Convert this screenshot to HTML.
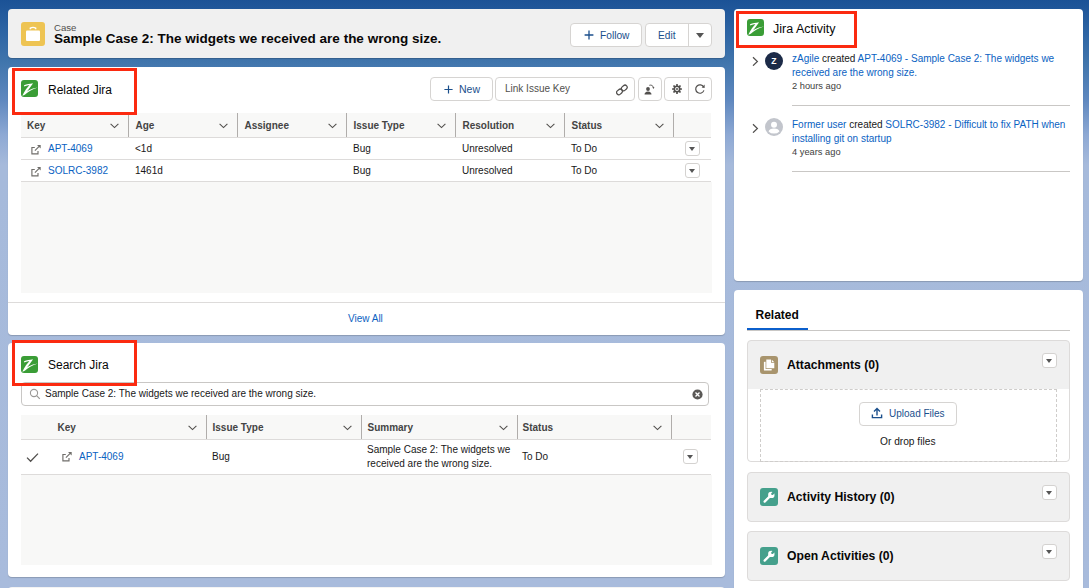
<!DOCTYPE html>
<html><head><meta charset="utf-8">
<style>
*{box-sizing:border-box;margin:0;padding:0}
html,body{width:1089px;height:588px;overflow:hidden}
body{font-family:"Liberation Sans",sans-serif;color:#181818;position:relative;
background:linear-gradient(180deg,#1b5296 0px,#2f66a5 35px,#4075ac 62px,#5f88bf 100px,#8ea9d4 135px,#a6badb 165px,#a8bbdc 588px);}
.abs{position:absolute}
.card{position:absolute;background:#fff;border-radius:4px;box-shadow:0 1px 1px rgba(0,0,0,.18)}
.redbox{position:absolute;border:3px solid #fb2a10;z-index:5}
.btn{position:absolute;background:#fff;border:1px solid #d6d4d2;border-radius:4px}
.t{position:absolute;white-space:nowrap;line-height:1}
.th{position:absolute;background:#f8f8f7;border-bottom:1px solid #dddbda}
.row{position:absolute;border-bottom:1px solid #dddbda;background:#fff}
.vd{position:absolute;width:1px;background:#b0adab}
.ddbtn{position:absolute;width:15px;height:15px;border:1px solid #d4d2d0;border-radius:3px;background:#fff}
.ddbtn:after{content:"";position:absolute;left:2.8px;top:4.6px;border-left:3.7px solid transparent;border-right:3.7px solid transparent;border-top:4.4px solid #555}
</style></head>
<body>

<div class="card" style="left:8px;top:9px;width:717px;height:49px;background:#f0f0f0"></div>
<svg class="abs" style="left:21px;top:22px" width="24" height="24" viewBox="0 0 24 24"><rect width="24" height="24" rx="3" fill="#eec453"/><rect x="5" y="8.4" width="14" height="10.7" rx="1" fill="#fff"/><path d="M9.3 7.3 V6.2 Q12 4.6 14.7 6.2 V7.3" fill="none" stroke="#fff" stroke-width="1.4"/></svg>
<div class="t" style="left:54px;top:22.5px;font-size:9.6px;font-weight:400;color:#514f4d;">Case</div>
<div class="t" style="left:54px;top:32px;font-size:13.5px;font-weight:700;color:#080707;">Sample Case 2: The widgets we received are the wrong size.</div>
<div class="btn" style="left:570px;top:23px;width:72px;height:24px"></div>
<svg class="abs" style="left:584px;top:30px" width="10" height="10" viewBox="0 0 10 10"><path d="M5 0.6 V9.4 M0.6 5 H9.4" stroke="#1b4f8c" stroke-width="1.3"/></svg>
<div class="t" style="left:600px;top:30.5px;font-size:10.2px;font-weight:400;color:#1b4f8c;">Follow</div>
<div class="btn" style="left:645px;top:23px;width:67px;height:24px"></div>
<div class="abs" style="left:688px;top:24px;width:1px;height:22px;background:#d6d4d2"></div>
<div class="t" style="left:658px;top:30.5px;font-size:10.2px;font-weight:400;color:#1b4f8c;">Edit</div>
<div class="abs" style="left:696px;top:33px;border-left:4.5px solid transparent;border-right:4.5px solid transparent;border-top:5px solid #555"></div>
<div class="card" style="left:8px;top:67px;width:717px;height:268px"></div>
<div class="redbox" style="left:12px;top:68px;width:125px;height:47px"></div>
<svg class="abs" style="left:21px;top:80px" width="17" height="17" viewBox="0 0 17 17"><rect width="17" height="17" rx="3" fill="#3a9d36"/><path d="M3.0 5.3 C5.8 4.3 8.6 3.7 11.8 3.5 L10.9 5.1 C8.3 5.1 6 5.5 3.3 6.4 Z M9.8 3.8 L11.9 3.6 C9.3 7.4 6.8 10.6 3.4 15.0 L1.3 15.8 C3.4 11.2 6.2 7.2 9.8 3.8 Z M1.5 15.6 C5 11 10 8.4 16.7 7.5 C11 9.4 6.8 12.0 3.8 14.8 Z" fill="#fff"/></svg>
<div class="t" style="left:48px;top:84px;font-size:12px;font-weight:400;color:#080707;">Related Jira</div>
<div class="btn" style="left:430px;top:77px;width:63px;height:24px"></div>
<svg class="abs" style="left:444px;top:85px" width="9" height="9" viewBox="0 0 9 9"><path d="M4.5 0.4 V8.6 M0.4 4.5 H8.6" stroke="#1b4f8c" stroke-width="1.2"/></svg>
<div class="t" style="left:459px;top:84px;font-size:10.5px;font-weight:400;color:#1b4f8c;">New</div>
<div class="btn" style="left:495px;top:77px;width:140px;height:24px;border-color:#d6d4d2"></div>
<div class="t" style="left:505px;top:84px;font-size:10px;font-weight:400;color:#514f4d;">Link Issue Key</div>
<svg class="abs" style="left:616px;top:84px" width="12" height="12" viewBox="0 0 12 12"><g fill="none" stroke="#514f4d" stroke-width="1.25"><rect x="-3.1" y="-2.2" width="6.2" height="4.4" rx="2.2" transform="translate(3.5 7.9) rotate(-42)"/><rect x="-3.1" y="-2.2" width="6.2" height="4.4" rx="2.2" transform="translate(8.3 3.9) rotate(-42)"/></g></svg>
<div class="btn" style="left:638px;top:77px;width:24px;height:24px"></div>
<svg class="abs" style="left:643px;top:83px" width="13" height="13" viewBox="0 0 13 13"><circle cx="5" cy="6" r="1.9" fill="#514f4d"/><path d="M1.5 11.5 Q1.6 8.6 5 8.4 Q8.4 8.6 8.5 11.5 Z" fill="#514f4d"/><path d="M6.3 2.3 Q9.5 1.4 10.5 4.6" fill="none" stroke="#514f4d" stroke-width="0.9"/><path d="M9.3 4.2 L11.4 4.0 L10.5 6.0 Z" fill="#514f4d"/></svg>
<div class="btn" style="left:664px;top:77px;width:48px;height:24px"></div>
<div class="abs" style="left:688px;top:78px;width:1px;height:22px;background:#d6d4d2"></div>
<svg class="abs" style="left:671px;top:83px" width="12" height="12" viewBox="0 0 12 12"><g fill="#514f4d"><circle cx="6" cy="6" r="3.5"/><rect x="5.15" y="1.0" width="1.7" height="10" rx=".5" transform="rotate(0 6 6)"/><rect x="5.15" y="1.0" width="1.7" height="10" rx=".5" transform="rotate(45 6 6)"/><rect x="5.15" y="1.0" width="1.7" height="10" rx=".5" transform="rotate(90 6 6)"/><rect x="5.15" y="1.0" width="1.7" height="10" rx=".5" transform="rotate(135 6 6)"/></g><circle cx="6" cy="6" r="1.9" fill="#fff"/><circle cx="6" cy="6" r="1.0" fill="#514f4d"/></svg>
<svg class="abs" style="left:694px;top:83px" width="12" height="12" viewBox="0 0 12 12"><path d="M9.6 4.0 A4.2 4.2 0 1 0 9.9 7.4" fill="none" stroke="#514f4d" stroke-width="1.2"/><path d="M7.6 4.6 L10.6 4.9 L10.6 1.6 Z" fill="#514f4d"/></svg>
<div class="th" style="left:21px;top:113px;width:690px;height:25px"></div>
<div class="t" style="left:27px;top:121px;font-size:10px;font-weight:700;color:#444;">Key</div>
<svg class="abs" style="left:110px;top:123px" width="9" height="6" viewBox="0 0 9 6"><path d="M0.6 0.8 L4.5 4.6 L8.4 0.8" fill="none" stroke="#514f4d" stroke-width="1.1"/></svg>
<div class="vd" style="left:128px;top:113px;height:24px"></div>
<div class="t" style="left:135.5px;top:121px;font-size:10px;font-weight:700;color:#444;">Age</div>
<svg class="abs" style="left:219px;top:123px" width="9" height="6" viewBox="0 0 9 6"><path d="M0.6 0.8 L4.5 4.6 L8.4 0.8" fill="none" stroke="#514f4d" stroke-width="1.1"/></svg>
<div class="vd" style="left:237px;top:113px;height:24px"></div>
<div class="t" style="left:244.5px;top:121px;font-size:10px;font-weight:700;color:#444;">Assignee</div>
<svg class="abs" style="left:328px;top:123px" width="9" height="6" viewBox="0 0 9 6"><path d="M0.6 0.8 L4.5 4.6 L8.4 0.8" fill="none" stroke="#514f4d" stroke-width="1.1"/></svg>
<div class="vd" style="left:346px;top:113px;height:24px"></div>
<div class="t" style="left:353.5px;top:121px;font-size:10px;font-weight:700;color:#444;">Issue Type</div>
<svg class="abs" style="left:437px;top:123px" width="9" height="6" viewBox="0 0 9 6"><path d="M0.6 0.8 L4.5 4.6 L8.4 0.8" fill="none" stroke="#514f4d" stroke-width="1.1"/></svg>
<div class="vd" style="left:455px;top:113px;height:24px"></div>
<div class="t" style="left:462.5px;top:121px;font-size:10px;font-weight:700;color:#444;">Resolution</div>
<svg class="abs" style="left:546px;top:123px" width="9" height="6" viewBox="0 0 9 6"><path d="M0.6 0.8 L4.5 4.6 L8.4 0.8" fill="none" stroke="#514f4d" stroke-width="1.1"/></svg>
<div class="vd" style="left:564px;top:113px;height:24px"></div>
<div class="t" style="left:571.5px;top:121px;font-size:10px;font-weight:700;color:#444;">Status</div>
<svg class="abs" style="left:655px;top:123px" width="9" height="6" viewBox="0 0 9 6"><path d="M0.6 0.8 L4.5 4.6 L8.4 0.8" fill="none" stroke="#514f4d" stroke-width="1.1"/></svg>
<div class="vd" style="left:673px;top:113px;height:24px"></div>
<div class="row" style="left:21px;top:138px;width:690px;height:22px"></div>
<svg class="abs" style="left:31px;top:144px" width="11" height="11" viewBox="0 0 11 11"><path d="M3.8 3.5 H0.9 V9.9 H7.0 V7.0" fill="none" stroke="#706e6b" stroke-width="1.15"/><path d="M3.9 6.7 L8.7 1.9" stroke="#706e6b" stroke-width="1.15"/><path d="M6.0 0.9 H9.7 V4.6 Z" fill="#706e6b"/></svg>
<div class="t" style="left:48px;top:144px;font-size:10px;font-weight:400;color:#0a62c2;">APT-4069</div>
<div class="t" style="left:135px;top:144px;font-size:10px;font-weight:400;color:#181818;">&lt;1d</div>
<div class="t" style="left:353px;top:144px;font-size:10px;font-weight:400;color:#181818;">Bug</div>
<div class="t" style="left:462px;top:144px;font-size:10px;font-weight:400;color:#181818;">Unresolved</div>
<div class="t" style="left:571px;top:144px;font-size:10px;font-weight:400;color:#181818;">To Do</div>
<div class="ddbtn" style="left:685px;top:141px"></div>
<div class="row" style="left:21px;top:160px;width:690px;height:22px"></div>
<svg class="abs" style="left:31px;top:166px" width="11" height="11" viewBox="0 0 11 11"><path d="M3.8 3.5 H0.9 V9.9 H7.0 V7.0" fill="none" stroke="#706e6b" stroke-width="1.15"/><path d="M3.9 6.7 L8.7 1.9" stroke="#706e6b" stroke-width="1.15"/><path d="M6.0 0.9 H9.7 V4.6 Z" fill="#706e6b"/></svg>
<div class="t" style="left:48px;top:166px;font-size:10px;font-weight:400;color:#0a62c2;">SOLRC-3982</div>
<div class="t" style="left:135px;top:166px;font-size:10px;font-weight:400;color:#181818;">1461d</div>
<div class="t" style="left:353px;top:166px;font-size:10px;font-weight:400;color:#181818;">Bug</div>
<div class="t" style="left:462px;top:166px;font-size:10px;font-weight:400;color:#181818;">Unresolved</div>
<div class="t" style="left:571px;top:166px;font-size:10px;font-weight:400;color:#181818;">To Do</div>
<div class="ddbtn" style="left:685px;top:163px"></div>
<div class="abs" style="left:21px;top:182px;width:691px;height:111px;background:#f8f8f7"></div>
<div class="abs" style="left:8px;top:302px;width:717px;height:1px;background:#dddbda"></div>
<div class="t" style="left:348px;top:314px;font-size:10px;font-weight:400;color:#0a62c2;">View All</div>
<div class="card" style="left:8px;top:343px;width:717px;height:234px"></div>
<div class="redbox" style="left:12px;top:340px;width:125px;height:46px"></div>
<svg class="abs" style="left:21px;top:356px" width="17" height="17" viewBox="0 0 17 17"><rect width="17" height="17" rx="3" fill="#3a9d36"/><path d="M3.0 5.3 C5.8 4.3 8.6 3.7 11.8 3.5 L10.9 5.1 C8.3 5.1 6 5.5 3.3 6.4 Z M9.8 3.8 L11.9 3.6 C9.3 7.4 6.8 10.6 3.4 15.0 L1.3 15.8 C3.4 11.2 6.2 7.2 9.8 3.8 Z M1.5 15.6 C5 11 10 8.4 16.7 7.5 C11 9.4 6.8 12.0 3.8 14.8 Z" fill="#fff"/></svg>
<div class="t" style="left:48px;top:359px;font-size:12px;font-weight:400;color:#080707;">Search Jira</div>
<div class="btn" style="left:21px;top:382px;width:688px;height:24px;border-color:#c9c7c5"></div>
<svg class="abs" style="left:29px;top:388px" width="12" height="12" viewBox="0 0 12 12"><circle cx="5" cy="5" r="3.6" fill="none" stroke="#9a9896" stroke-width="1.1"/><path d="M7.6 7.6 L10.8 10.8" stroke="#9a9896" stroke-width="1.2"/></svg>
<div class="t" style="left:45px;top:389px;font-size:10px;font-weight:400;color:#181818;">Sample Case 2: The widgets we received are the wrong size.</div>
<svg class="abs" style="left:692px;top:389px" width="11" height="11" viewBox="0 0 11 11"><circle cx="5.5" cy="5.5" r="5.1" fill="#5a5856"/><path d="M3.5 3.5 L7.5 7.5 M7.5 3.5 L3.5 7.5" stroke="#fff" stroke-width="1.3"/></svg>
<div class="th" style="left:21px;top:415px;width:690px;height:25px"></div>
<div class="t" style="left:57.5px;top:423px;font-size:10px;font-weight:700;color:#444;">Key</div>
<svg class="abs" style="left:188px;top:425px" width="9" height="6" viewBox="0 0 9 6"><path d="M0.6 0.8 L4.5 4.6 L8.4 0.8" fill="none" stroke="#514f4d" stroke-width="1.1"/></svg>
<div class="vd" style="left:206px;top:415px;height:24px"></div>
<div class="t" style="left:212.5px;top:423px;font-size:10px;font-weight:700;color:#444;">Issue Type</div>
<svg class="abs" style="left:343px;top:425px" width="9" height="6" viewBox="0 0 9 6"><path d="M0.6 0.8 L4.5 4.6 L8.4 0.8" fill="none" stroke="#514f4d" stroke-width="1.1"/></svg>
<div class="vd" style="left:361px;top:415px;height:24px"></div>
<div class="t" style="left:367.5px;top:423px;font-size:10px;font-weight:700;color:#444;">Summary</div>
<svg class="abs" style="left:499px;top:425px" width="9" height="6" viewBox="0 0 9 6"><path d="M0.6 0.8 L4.5 4.6 L8.4 0.8" fill="none" stroke="#514f4d" stroke-width="1.1"/></svg>
<div class="vd" style="left:517px;top:415px;height:24px"></div>
<div class="t" style="left:522.5px;top:423px;font-size:10px;font-weight:700;color:#444;">Status</div>
<svg class="abs" style="left:653px;top:425px" width="9" height="6" viewBox="0 0 9 6"><path d="M0.6 0.8 L4.5 4.6 L8.4 0.8" fill="none" stroke="#514f4d" stroke-width="1.1"/></svg>
<div class="vd" style="left:671px;top:415px;height:24px"></div>
<div class="row" style="left:21px;top:440px;width:690px;height:35px"></div>
<svg class="abs" style="left:26px;top:452px" width="13" height="11" viewBox="0 0 13 11"><path d="M1 5.6 L4.6 9.2 L12 1.6" fill="none" stroke="#514f4d" stroke-width="1.3"/></svg>
<svg class="abs" style="left:62px;top:451px" width="11" height="11" viewBox="0 0 11 11"><path d="M3.8 3.5 H0.9 V9.9 H7.0 V7.0" fill="none" stroke="#706e6b" stroke-width="1.15"/><path d="M3.9 6.7 L8.7 1.9" stroke="#706e6b" stroke-width="1.15"/><path d="M6.0 0.9 H9.7 V4.6 Z" fill="#706e6b"/></svg>
<div class="t" style="left:79px;top:452px;font-size:10px;font-weight:400;color:#0a62c2;">APT-4069</div>
<div class="t" style="left:212px;top:452px;font-size:10px;font-weight:400;color:#181818;">Bug</div>
<div class="t" style="left:367px;top:445px;font-size:10px;font-weight:400;color:#181818;">Sample Case 2: The widgets we</div>
<div class="t" style="left:367px;top:459px;font-size:10px;font-weight:400;color:#181818;">received are the wrong size.</div>
<div class="t" style="left:522px;top:452px;font-size:10px;font-weight:400;color:#181818;">To Do</div>
<div class="ddbtn" style="left:683px;top:449px"></div>
<div class="abs" style="left:21px;top:475px;width:691px;height:90px;background:#f8f8f7"></div>
<div class="abs" style="left:8px;top:587px;width:717px;height:4px;background:#f3f3f3;border-radius:4px 4px 0 0"></div>
<div class="card" style="left:734px;top:9px;width:349px;height:272px"></div>
<div class="redbox" style="left:736px;top:11px;width:121px;height:37px"></div>
<svg class="abs" style="left:747px;top:19px" width="17" height="17" viewBox="0 0 17 17"><rect width="17" height="17" rx="3" fill="#3a9d36"/><path d="M3.0 5.3 C5.8 4.3 8.6 3.7 11.8 3.5 L10.9 5.1 C8.3 5.1 6 5.5 3.3 6.4 Z M9.8 3.8 L11.9 3.6 C9.3 7.4 6.8 10.6 3.4 15.0 L1.3 15.8 C3.4 11.2 6.2 7.2 9.8 3.8 Z M1.5 15.6 C5 11 10 8.4 16.7 7.5 C11 9.4 6.8 12.0 3.8 14.8 Z" fill="#fff"/></svg>
<div class="t" style="left:773px;top:23px;font-size:12.5px;font-weight:400;color:#080707;">Jira Activity</div>
<svg class="abs" style="left:752px;top:56px" width="7" height="10" viewBox="0 0 7 10"><path d="M1 1.3 L5.4 5.5 L1 9.7" fill="none" stroke="#514f4d" stroke-width="1.2"/></svg>
<div class="abs" style="left:765px;top:52px;width:18px;height:18px;border-radius:50%;background:#1c2b48"></div>
<div class="t" style="left:771.3px;top:57.2px;font-size:8.6px;font-weight:700;color:#fff;">Z</div>
<div class="t" style="left:792px;top:52px;font-size:10px;line-height:14px;color:#0a62c2">zAgile <span style="color:#181818">created</span> APT-4069 - Sample Case 2: The widgets we<br>received are the wrong size.</div>
<div class="t" style="left:792px;top:82px;font-size:9.3px;font-weight:400;color:#3e3e3c;">2 hours ago</div>
<div class="abs" style="left:792px;top:105px;width:278px;height:1px;background:#c9c7c5"></div>
<svg class="abs" style="left:752px;top:123px" width="7" height="10" viewBox="0 0 7 10"><path d="M1 1.3 L5.4 5.5 L1 9.7" fill="none" stroke="#514f4d" stroke-width="1.2"/></svg>
<svg class="abs" style="left:765px;top:118px" width="18" height="18" viewBox="0 0 18 18"><circle cx="9" cy="9" r="9" fill="#c2c5cc"/><circle cx="9" cy="6.8" r="3" fill="#fff"/><path d="M3.6 13.4 Q4.2 10.4 9 10.4 Q13.8 10.4 14.4 13.4 Q12.4 15.6 9 15.6 Q5.6 15.6 3.6 13.4 Z" fill="#fff"/></svg>
<div class="t" style="left:792px;top:118px;font-size:10px;line-height:14px;color:#0a62c2">Former user <span style="color:#181818">created</span> SOLRC-3982 - Difficult to fix PATH when<br>installing git on startup</div>
<div class="t" style="left:792px;top:148px;font-size:9.3px;font-weight:400;color:#3e3e3c;">4 years ago</div>
<div class="abs" style="left:792px;top:171px;width:278px;height:1px;background:#c9c7c5"></div>
<div class="card" style="left:734px;top:290px;width:349px;height:310px"></div>
<div class="t" style="left:755.5px;top:309px;font-size:12px;font-weight:700;color:#080707;">Related</div>
<div class="abs" style="left:747px;top:330px;width:323px;height:1px;background:#c9c7c5"></div>
<div class="abs" style="left:747px;top:328px;width:61px;height:2px;background:#0b5fcc"></div>
<div class="abs" style="left:747px;top:340px;width:323px;height:122px;background:#f0f0f0;border:1px solid #dddbda;border-radius:4px"></div>
<svg class="abs" style="left:760px;top:356px" width="18" height="18" viewBox="0 0 18 18"><rect width="18" height="18" rx="3" fill="#a8946d"/><rect x="3.9" y="5.8" width="7.8" height="8.8" rx="0.6" fill="#fff"/><path d="M5.6 2.9 H11.5 L14.9 6.3 V12.9 H5.6 Z" fill="#a8946d"/><path d="M6.3 3.5 H11.0 V6.8 H14.3 V12.3 H6.3 Z" fill="#fff"/><path d="M11.8 3.7 L14.1 6.0 H11.8 Z" fill="#fff"/></svg>
<div class="t" style="left:787px;top:359px;font-size:12.2px;font-weight:700;color:#080707;">Attachments (0)</div>
<div class="ddbtn" style="left:1042px;top:353px"></div>
<div class="abs" style="left:748px;top:389px;width:321px;height:72px;background:#fff;border-radius:0 0 4px 4px"></div>
<div class="abs" style="left:760px;top:389px;width:297px;height:73px;border:1px dashed #cfcdcb"></div>
<div class="btn" style="left:859px;top:402px;width:98px;height:24px"></div>
<svg class="abs" style="left:871px;top:407px" width="12" height="12" viewBox="0 0 12 12"><path d="M6 8.5 V1.8 M3 4.6 L6 1.6 L9 4.6" fill="none" stroke="#1b4f8c" stroke-width="1.4"/><path d="M1.4 7.6 V10.6 H10.6 V7.6" fill="none" stroke="#1b4f8c" stroke-width="1.4"/></svg>
<div class="t" style="left:889px;top:409px;font-size:10px;font-weight:400;color:#1b4f8c;">Upload Files</div>
<div class="t" style="left:880px;top:437px;font-size:10.2px;font-weight:400;color:#181818;">Or drop files</div>
<div class="abs" style="left:747px;top:472px;width:323px;height:50px;background:#f0f0f0;border:1px solid #dddbda;border-radius:4px"></div>
<svg class="abs" style="left:760px;top:488px" width="18" height="18" viewBox="0 0 18 18"><rect width="18" height="18" rx="3" fill="#45a08c"/><path d="M4.6 13.6 L9.6 8.6" stroke="#fff" stroke-width="2.3" stroke-linecap="round"/><circle cx="11.3" cy="6.9" r="3.2" fill="#fff"/><path d="M12.3 5.9 L15.5 2.7" stroke="#45a08c" stroke-width="2.3" stroke-linecap="round"/></svg>
<div class="t" style="left:787px;top:491px;font-size:12.2px;font-weight:700;color:#080707;">Activity History (0)</div>
<div class="ddbtn" style="left:1042px;top:485px"></div>
<div class="abs" style="left:747px;top:531px;width:323px;height:50px;background:#f0f0f0;border:1px solid #dddbda;border-radius:4px"></div>
<svg class="abs" style="left:760px;top:547px" width="18" height="18" viewBox="0 0 18 18"><rect width="18" height="18" rx="3" fill="#45a08c"/><path d="M4.6 13.6 L9.6 8.6" stroke="#fff" stroke-width="2.3" stroke-linecap="round"/><circle cx="11.3" cy="6.9" r="3.2" fill="#fff"/><path d="M12.3 5.9 L15.5 2.7" stroke="#45a08c" stroke-width="2.3" stroke-linecap="round"/></svg>
<div class="t" style="left:787px;top:550px;font-size:12.2px;font-weight:700;color:#080707;">Open Activities (0)</div>
<div class="ddbtn" style="left:1042px;top:544px"></div>
</body></html>
